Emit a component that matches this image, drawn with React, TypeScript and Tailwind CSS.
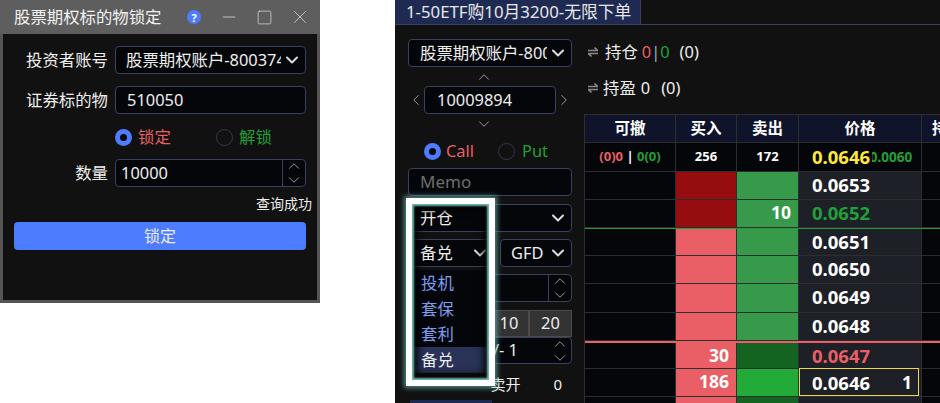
import React from 'react';
import { ChevronDown, ChevronUp, ChevronLeft, ChevronRight, Minus, Square, X } from 'lucide-react';

const FONT = 'font-["Noto_Sans","Noto_Sans_CJK_SC",sans-serif]';
const box = 'rounded-[4px] border-[1.5px] border-[#3a4160] bg-[#05060a]';

const UpDown = () => (
  <div className="flex flex-col items-center text-[#b5b5b5]">
    <ChevronUp size={18} strokeWidth={1.1} className="-my-[2px]" />
    <ChevronDown size={18} strokeWidth={1.1} className="-my-[2px]" />
  </div>
);

const Stepper = () => (
  <div className="flex h-full w-[23px] shrink-0 items-center justify-center border-l-[1.5px] border-[#3a4160]">
    <UpDown />
  </div>
);

const Caret = () => <ChevronDown size={20} strokeWidth={2.4} className="ml-auto shrink-0 text-[#dddddd]" />;

const Radio = ({ on }: { on?: boolean }) =>
  on ? (
    <span className="flex h-[17px] w-[17px] items-center justify-center rounded-full bg-[#4d7cfe]">
      <span className="h-[7px] w-[7px] rounded-full bg-[#0a0a0a]" />
    </span>
  ) : (
    <span className="h-[17px] w-[17px] rounded-full border-[1.5px] border-[#333a50]" />
  );

const Swap = () => (
  <svg width="10" height="12" viewBox="0 0 10 12" fill="none" stroke="#8a8a8a" strokeWidth="1.6" className="shrink-0">
    <path d="M0 4.5H9.5L6.5 1.5" />
    <path d="M10 7.5H0.5L3.5 10.5" />
  </svg>
);

const LockWindow = () => (
  <div className="flex h-[303px] w-[320px] shrink-0 flex-col border-[3px] border-t-0 border-[#555555] bg-[#111111]">
    <div className="-mx-[3px] flex h-[34px] shrink-0 items-center bg-[#5e5e5e] pl-[14px] text-[16.4px] text-[#f2f2f2]">
      <span className="w-[173px]">股票期权标的物锁定</span>
      <span className="flex h-[14px] w-[14px] items-center justify-center rounded-full bg-[#4d7cfe] text-[11px] font-bold leading-none text-white">?</span>
      <Minus size={20} strokeWidth={1} className="ml-[18px] text-[#d5d5d5]" />
      <Square size={17} strokeWidth={1.1} className="ml-[17px] text-[#d5d5d5]" />
      <X size={22} strokeWidth={0.9} className="ml-[16px] text-[#d5d5d5]" />
    </div>

    <div className="flex flex-col pl-[23px] pt-[12px] text-[16.4px] text-[#eeeeee]">
      <div className="flex items-center gap-[7px]">
        <span className="w-[82px] text-right">投资者账号</span>
        <div className={`${box} flex h-[28px] w-[191px] items-center pl-[10px] pr-[3px]`}>
          <span className="w-[155px] overflow-hidden whitespace-nowrap">股票期权账户-800374</span>
          <Caret />
        </div>
      </div>
      <div className="mt-[12px] flex items-center gap-[7px]">
        <span className="w-[82px] text-right">证券标的物</span>
        <div className={`${box} flex h-[28px] w-[191px] items-center pl-[11px]`}>510050</div>
      </div>
      <div className="ml-[89px] mt-[9px] flex h-[28px] items-center">
        <Radio on />
        <span className="ml-[6px] w-[78px] text-[#e95f65]">锁定</span>
        <Radio />
        <span className="ml-[6px] text-[#22a038]">解锁</span>
      </div>
      <div className="mt-[8px] flex items-center gap-[7px]">
        <span className="w-[82px] text-right">数量</span>
        <div className={`${box} flex h-[28px] w-[191px] items-center pl-[5px]`}>
          <span className="flex-1">10000</span>
          <Stepper />
        </div>
      </div>
    </div>
    <div className="mt-[4px] pr-[5px] text-right text-[14px] leading-[26px] text-[#eeeeee]">查询成功</div>
    <div className="ml-[11px] mt-[5px] flex h-[28px] w-[292px] items-center justify-center rounded-[4px] bg-[#4d7cfe] text-[16px] text-[#eeeeee]">锁定</div>
  </div>
);

const OrderForm = () => (
  <div className="relative w-[177px] shrink-0 pl-[13px] pt-[14px] text-[16.4px] text-[#eeeeee]">
    <div className={`${box} flex h-[28px] w-[164px] items-center pl-[11px] pr-[3px]`}>
      <span className="w-[127px] overflow-hidden whitespace-nowrap">股票期权账户-800374</span>
      <Caret />
    </div>
    <div className="mt-[3px] flex h-[14px] w-[152px] items-center justify-center text-[#b5b5b5]"><ChevronUp size={18} strokeWidth={1.1} /></div>
    <div className="mt-[2px] flex w-[164px] items-center justify-between text-[#b5b5b5]">
      <ChevronLeft size={18} strokeWidth={1.1} className="-mx-[1px]" />
      <div className={`${box} flex h-[28px] w-[132px] items-center pl-[12px] text-[#eeeeee]`}>10009894</div>
      <ChevronRight size={18} strokeWidth={1.1} className="-mx-[1px]" />
    </div>
    <div className="mt-[3px] flex h-[14px] w-[152px] items-center justify-center text-[#b5b5b5]"><ChevronDown size={18} strokeWidth={1.1} /></div>
    <div className="ml-[16px] mt-[6px] flex h-[28px] items-center">
      <Radio on />
      <span className="ml-[5px] w-[52px] text-[#e95f65]">Call</span>
      <Radio />
      <span className="ml-[7px] text-[#22a038]">Put</span>
    </div>
    <div className={`${box} mt-[3px] flex h-[28px] w-[164px] items-center pl-[11px] text-[17px] text-[#6d6d6d]`}>Memo</div>
    <div className={`${box} mt-[8px] flex h-[28px] w-[164px] items-center pl-[11px] pr-[3px]`}>
      <span>开仓</span>
      <Caret />
    </div>
    <div className="mt-[7px] flex w-[164px] justify-between">
      <div className={`${box} flex h-[28px] w-[86px] items-center pl-[11px] pr-[3px]`}>
        <span>备兑</span>
        <Caret />
      </div>
      <div className={`${box} flex h-[28px] w-[72px] items-center pl-[10px] pr-[3px]`}>
        <span>GFD</span>
        <Caret />
      </div>
    </div>
    <div className={`${box} mt-[7px] flex h-[28px] w-[164px] justify-end`}><Stepper /></div>
    <div className="mt-[8px] flex h-[27px] w-[164px] justify-end">
      <span className="flex w-[40px] items-center justify-center border border-[#4a4a4a] bg-[#333333]">10</span>
      <span className="flex w-[43px] items-center justify-center border border-[#4a4a4a] bg-[#333333]">20</span>
    </div>
    <div className={`${box} flex h-[27px] w-[164px] items-center justify-end`}>
      <span className="mr-[33px]">+/- 1</span>
      <div className="mr-[2px]"><UpDown /></div>
    </div>
    <div className="mt-[8px] flex w-[164px] items-center justify-end text-[15px] leading-[24px]">
      <span>卖开</span>
      <span className="ml-[33px] mr-[10px]">0</span>
    </div>
    <div className="ml-[2px] mt-[4px] h-[6px] w-[82px] bg-[#1e2a52]" />

    {/* dropdown list of the 备兑 select */}
    <div className="absolute left-[18px] top-[245px] w-[75px] bg-[#05060a] text-[16.4px] leading-[25.7px] text-[#7d9df0]">
      <div className="pl-[8px]">投机</div>
      <div className="pl-[8px]">套保</div>
      <div className="pl-[8px]">套利</div>
      <div className="bg-[#2a3358] pl-[8px] text-[#eeeeee]">备兑</div>
    </div>
    {/* annotation frame drawn over the form */}
    <div className="pointer-events-none absolute left-[11px] top-[173px] h-[188px] w-[89px] border-[6px] border-white shadow-[0_0_5px_2px_rgba(110,190,180,0.7),inset_0_0_2px_2px_#6fb8ae,inset_0_0_7px_6px_rgba(0,0,0,0.85)]" />
  </div>
);

const RED = 'bg-[#e95f65]';
const DARK_RED = 'bg-[#960d0f]';
const GREEN = 'bg-[#379a4a]';
const DARK_GREEN = 'bg-[#126420]';
const BRIGHT = 'bg-[#22ab38]';

const rows = [
  { price: '0.0653', h: 'h-[28px]', buy: DARK_RED, sell: GREEN },
  { price: '0.0652', h: 'h-[28px]', buy: DARK_RED, sell: GREEN, sellQty: '10', color: 'text-[#22a038]' },
  { price: '0.0651', h: 'h-[28px]', buy: RED, sell: GREEN, line: 'border-t border-t-[#2a9a3a]' },
  { price: '0.0650', h: 'h-[28px]', buy: RED, sell: GREEN },
  { price: '0.0649', h: 'h-[29px]', buy: RED, sell: GREEN },
  { price: '0.0648', h: 'h-[28px]', buy: RED, sell: GREEN },
  { price: '0.0647', h: 'h-[28px]', buy: RED, sell: DARK_GREEN, buyQty: '30', color: 'text-[#e95f65]', line: 'border-t-2 border-t-[#e95f65]' },
  { price: '0.0646', h: 'h-[28px]', buy: RED, sell: BRIGHT, buyQty: '186', current: true },
  { price: '', h: 'h-[28px]', buy: RED, sell: DARK_GREEN },
];

const grid = 'grid grid-cols-[90px_60px_61px_122px_1fr] gap-x-px bg-[#2e2e2e]';

const Ladder = () => (
  <div className="ml-[-4px] mt-[13px] border-l border-t border-[#2e2e2e] font-bold text-white">
    <div className={`${grid} h-[28px] border-b border-[#2e2e2e] text-[15.5px] leading-[26px]`}>
      <div className="bg-[#10142a] text-center">可撤</div>
      <div className="bg-[#10142a] text-center">买入</div>
      <div className="bg-[#10142a] text-center">卖出</div>
      <div className="bg-[#10142a] text-center">价格</div>
      <div className="overflow-hidden whitespace-nowrap bg-[#10142a] pl-[10px]">持仓</div>
    </div>
    <div className={`${grid} h-[29px] border-b border-[#2e2e2e] text-[13px] leading-[26px]`}>
      <div className="bg-[#05060a] text-center">
        <span className="text-[#e95f65]">(0)0</span> | <span className="text-[#22a038]">0(0)</span>
      </div>
      <div className="bg-[#05060a] text-center">256</div>
      <div className="bg-[#05060a] text-center">172</div>
      <div className="flex items-center overflow-hidden bg-[#05060a] pl-[13px]">
        <span className="text-[18.5px] text-[#ffe83c]">0.0646</span>
        <span className="ml-[2px] flex w-[40px] shrink-0 justify-end overflow-hidden whitespace-nowrap text-[13.5px] text-[#22a038]"><span className="shrink-0">0.0060</span></span>
      </div>
      <div className="bg-[#05060a]" />
    </div>
    {rows.map((r, i) => (
      <div
        key={i}
        className={`${grid} ${r.h} grid-rows-[minmax(0,1fr)] border-b border-[#2e2e2e] text-[17.5px] leading-[25px] ${r.line ?? ''}`}
      >
        <div className="bg-[#05060a]" />
        <div className={`${r.buy} pr-[7px] text-right`}>{r.buyQty}</div>
        <div className={`${r.sell} pr-[7px] text-right`}>{r.sellQty}</div>
        <div className="bg-[#1e2028] text-[18.5px]">
          {r.current ? (
            <div className="-mt-px flex h-[28px] w-[120px] items-center justify-between border border-[#f0d84a] pl-[12px] pr-[6px]">
              <span>{r.price}</span>
              <span className="text-[17.5px]">1</span>
            </div>
          ) : (
            <div className={`pl-[13px] ${r.color ?? ''}`}>{r.price}</div>
          )}
        </div>
        <div className="bg-[#05060a]" />
      </div>
    ))}
  </div>
);

const TradePanel = () => (
  <div className="flex h-[403px] min-w-0 flex-1 flex-col overflow-hidden bg-[#111111]">
    <div className="flex h-[25px] shrink-0 border-b-[1.5px] border-[#3a4160]">
      <div className="flex w-[246px] items-center whitespace-nowrap border-r-[1.5px] border-[#3a4160] bg-[#1e2a52] pl-[11px] text-[16.8px] text-[#e8e8e8]">
        1-50ETF购10月3200-无限下单
      </div>
    </div>
    <div className="flex min-h-0 flex-1">
      <OrderForm />
      <div className="min-w-0 flex-1 pl-[16px] text-[16.4px] text-[#eeeeee]">
        <div className="mt-[14px] flex h-[26px] items-center">
          <Swap />
          <span className="ml-[7px]">持仓</span>
          <span className="ml-[4px] text-[#e95f65]">0</span>
          <span className="text-[#8fb0d8]">|</span>
          <span className="text-[#22a038]">0</span>
          <span className="ml-[10px]">(0)</span>
        </div>
        <div className="mt-[10px] flex h-[26px] items-center">
          <Swap />
          <span className="ml-[5px]">持盈</span>
          <span className="ml-[5px]">0</span>
          <span className="ml-[11px]">(0)</span>
        </div>
        <Ladder />
      </div>
    </div>
  </div>
);

export default function App() {
  return (
    <div className={`${FONT} flex h-[403px] w-[940px] items-start gap-[75px] overflow-hidden bg-white`}>
      <LockWindow />
      <TradePanel />
    </div>
  );
}
